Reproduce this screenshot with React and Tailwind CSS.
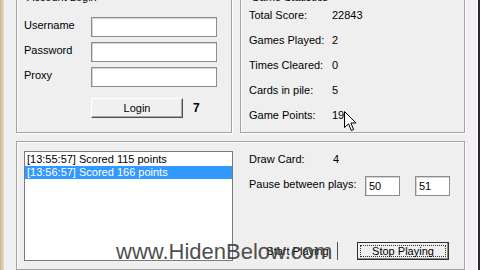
import React from 'react';

const STATS = [
    ['Total Score:', '22843'],
    ['Games Played:', '2'],
    ['Times Cleared:', '0'],
    ['Cards in pile:', '5'],
    ['Game Points:', '19'],
];

const LOG = [
    { text: '[13:55:57] Scored 115 points', selected: false },
    { text: '[13:56:57] Scored 166 points', selected: true },
];

const font = { fontFamily: '"Liberation Sans", Arial, sans-serif' };

function GroupBox({ title, className, children }) {
    return (
        <div className={'flex flex-col border border-[#a3a3a3] shadow-[1px_1px_0_#ffffff,inset_1px_1px_0_#ffffff] ' + className}>
            {title && (
                <span className="-mt-[7px] ml-[8px] h-[13px] w-fit bg-[#efefef] px-[2px] leading-[13px]">{title}</span>
            )}
            {children}
        </div>
    );
}

function TextBox({ value, className }) {
    return (
        <div className={'h-[20px] border border-[#8c8c8c] bg-white pl-[3px] leading-[18px] shadow-[inset_1px_1px_0_#d4d4d4] ' + className}>
            {value}
        </div>
    );
}

export default function App() {
    return (
        <div className="flex h-[270px] w-[480px] overflow-hidden text-[11px] text-black" style={font}>
            {/* scrap of desktop on the left */}
            <div className="w-[4px] bg-gradient-to-r from-[#c8b692] to-[#e6dcc6]" />

            <div className="flex w-[464px] flex-col bg-[#efefef] pl-[12px]">
                <div className="-mt-[3px] flex gap-[8px]">
                    <GroupBox title="Account Login" className="h-[136px] w-[216px]">
                        <div className="mt-[13px] flex flex-col gap-[6px] pl-[7px]">
                            {['Username', 'Password', 'Proxy'].map(label => (
                                <div key={label} className="flex h-[19px] items-center">
                                    <span className="-mt-[3px] w-[67px]">{label}</span>
                                    <TextBox className="w-[126px]" />
                                </div>
                            ))}
                        </div>
                        <div className="mt-[12px] flex items-center pl-[74px]">
                            <button className="h-[20px] w-[92px] border border-b-[#505050] border-l-white border-r-[#505050] border-t-white bg-[#f0f0f0] leading-[18px] shadow-[inset_-1px_-1px_0_#a8a8a8]">
                                Login
                            </button>
                            <span className="ml-[10px] text-[12px] font-bold">7</span>
                        </div>
                    </GroupBox>

                    <GroupBox title="Game Statistics" className="h-[136px] w-[225px]">
                        <div className="-mt-[1px] flex flex-col pl-[8px]">
                            {STATS.map(([label, value]) => (
                                <div key={label} className="flex h-[25px] items-center">
                                    <span className="w-[83px]">{label}</span>
                                    <span>{value}</span>
                                </div>
                            ))}
                        </div>
                    </GroupBox>
                </div>

                <GroupBox className="mt-[8px] h-[140px] w-[449px]">
                    <div className="flex pl-[7px] pt-[9px]">
                        <div className="h-[110px] w-[209px] border border-[#7a7a7a] bg-white pt-[1px]">
                            {LOG.map(item => (
                                <div
                                    key={item.text}
                                    className={'h-[13px] pl-[2px] leading-[13px] ' + (item.selected ? 'bg-[#3399ff] text-white' : '')}
                                >
                                    {item.text}
                                </div>
                            ))}
                        </div>

                        <div className="ml-[16px] flex flex-col">
                            <div className="flex h-[16px] items-center">
                                <span className="w-[84px]">Draw Card:</span>
                                <span>4</span>
                            </div>
                            <div className="mt-[9px] flex h-[20px] items-center">
                                <span className="-mt-[4px] w-[116px]">Pause between plays:</span>
                                <TextBox value="50" className="w-[35px]" />
                                <TextBox value="51" className="ml-[15px] w-[35px]" />
                            </div>
                            <div className="mt-[46px] flex items-center">
                                <button className="ml-[9px] h-[18px] w-[80px] border-r border-r-[#505050] leading-[16px]">
                                    Start Playing
                                </button>
                                <button className="ml-[19px] h-[18px] w-[92px] border border-[#303030] bg-[#f0f0f0] p-[2px] shadow-[inset_-1px_-1px_0_#8a8a8a]">
                                    <span className="block h-full border border-dotted border-[#303030] leading-[11px]">Stop Playing</span>
                                </button>
                            </div>
                        </div>
                    </div>
                </GroupBox>
            </div>

            <div className="w-[10px] bg-[#f5eef5] shadow-[inset_-1px_0_0_#fbf8fb]" />
            <div className="w-[2px] bg-[#2a2a2a]" />

            {/* watermark over the form */}
            <div className="pointer-events-none absolute left-[116px] top-[241px] text-[22px] leading-[22px] text-[#3c3c3c] opacity-90">
                www.HidenBelow.com
            </div>

            {/* mouse pointer */}
            <svg className="absolute left-[344px] top-[111px]" width="13" height="21" viewBox="0 0 13 21">
                <path d="M0.5 0.5 L0.5 16.5 L4.5 12.8 L7.3 19.5 L9.6 18.5 L6.9 12 L12 12 Z" fill="#ffffff" stroke="#000000" strokeWidth="1" strokeLinejoin="miter" />
            </svg>
        </div>
    );
}
